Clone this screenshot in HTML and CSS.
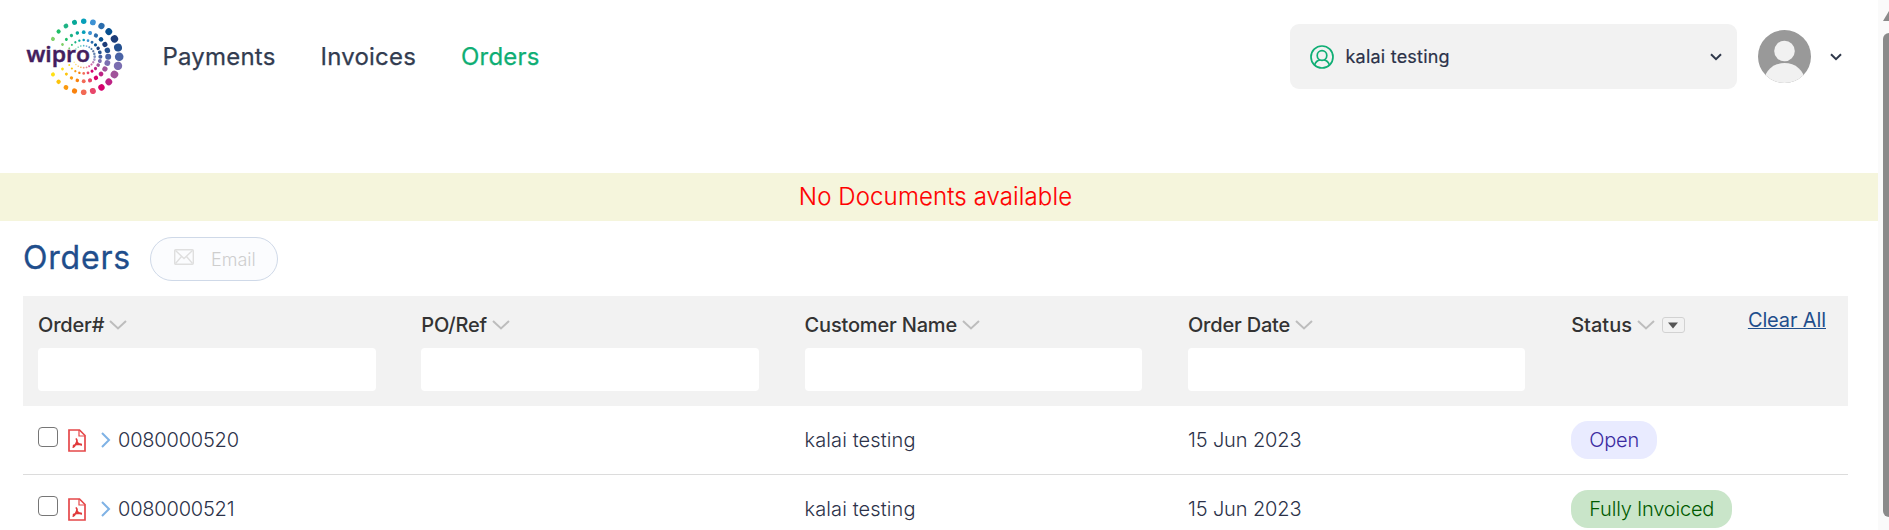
FILE: index.html
```html
<!DOCTYPE html>
<html lang="en">
<head>
<meta charset="utf-8">
<title>Orders</title>
<link rel="stylesheet" href="styles.css">
</head>
<body>
<svg class="defs" width="0" height="0">
  <defs>
    <g id="ring">
      <circle cx="35.5" r="4.3" fill="#4a63a5"/>
      <circle cx="35.5" r="4.2" fill="#7b6eb0" transform="rotate(15)"/>
      <circle cx="35.5" r="3.8" fill="#a1539a" transform="rotate(30)"/>
      <circle cx="35.5" r="3.4" fill="#bd2284" transform="rotate(45)"/>
      <circle cx="35.5" r="3.2" fill="#d6006c" transform="rotate(60)"/>
      <circle cx="35.5" r="3" fill="#e8476a" transform="rotate(75)"/>
      <circle cx="35.5" r="2.8" fill="#f26a55" transform="rotate(90)"/>
      <circle cx="35.5" r="2.6" fill="#f9820d" transform="rotate(105)"/>
      <circle cx="35.5" r="2.4" fill="#fb9a10" transform="rotate(120)"/>
      <circle cx="35.5" r="2.2" fill="#fdc40c" transform="rotate(135)"/>
      <circle cx="35.5" r="2" fill="#ffe014" transform="rotate(150)"/>
      <circle cx="35.5" r="4" fill="#24508f" transform="rotate(-15)"/>
      <circle cx="35.5" r="3.7" fill="#1c3c78" transform="rotate(-30)"/>
      <circle cx="35.5" r="3.4" fill="#075090" transform="rotate(-45)"/>
      <circle cx="35.5" r="3.1" fill="#2b6dad" transform="rotate(-60)"/>
      <circle cx="35.5" r="2.9" fill="#3d92d4" transform="rotate(-75)"/>
      <circle cx="35.5" r="2.7" fill="#079fb9" transform="rotate(-90)"/>
      <circle cx="35.5" r="2.5" fill="#08a898" transform="rotate(-105)"/>
      <circle cx="35.5" r="2.4" fill="#1eb384" transform="rotate(-120)"/>
      <circle cx="35.5" r="2.1" fill="#1dbe67" transform="rotate(-135)"/>
      <circle cx="35.5" r="2" fill="#7fd069" transform="rotate(-150)"/>
    </g>
    <symbol id="sort" viewBox="0 0 18 10"><path d="M1 1l8 7.5L17 1" fill="none" stroke="#bdbdbd" stroke-width="2"/></symbol>
    <symbol id="caret" viewBox="0 0 12 8"><path d="M1 1.2l5 5 5-5" fill="none" stroke="#2f384a" stroke-width="2"/></symbol>
    <symbol id="pdf" viewBox="0 0 18 23">
      <path d="M1 1h10.5l5.5 5.5V22H1z" fill="none" stroke="#e5484a" stroke-width="1.7"/>
      <path d="M11 1v6h6" fill="none" stroke="#e5484a" stroke-width="1.2"/>
      <path d="M8.300 10c1 1 .5 3.500-.6 5.300-.8 1.400-1.700 2.700-2.500 2.800M5.600 16.600c2-1 4.600-1.600 7.600-1.300M8.800 12.500c.7 1.600 2.300 3 4.400 3.500" fill="none" stroke="#e03a3c" stroke-width="1.700" stroke-linecap="round"/>
    </symbol>
    <symbol id="open" viewBox="0 0 10 16"><path d="M1 1l7 7-7 7" fill="none" stroke="#7fb2e5" stroke-width="2"/></symbol>
  </defs>
</svg>
<div class="app">
  <div class="page">
    <header class="topbar">
      <svg class="logo" width="100" height="82" viewBox="25 16 100 82">
        <g transform="translate(83.7 56.7)">
          <use href="#ring"/>
          <use href="#ring" transform="scale(.69)"/>
          <use href="#ring" transform="scale(.47)"/>
          <use href="#ring" transform="scale(.31)" opacity=".7"/>
        </g>
        <text class="logo-text" x="26.500" y="62" textLength="63.500" lengthAdjust="spacingAndGlyphs">wipro</text>
      </svg>
      <nav class="nav">
        <a>Payments</a>
        <a>Invoices</a>
        <a class="current">Orders</a>
      </nav>
      <div class="account">
        <svg width="24" height="24" viewBox="0 0 24 24" fill="none" stroke="#0fae74" stroke-width="1.700">
          <circle cx="12" cy="12" r="11"/><circle cx="12" cy="10.500" r="4.800"/>
          <path d="M4.600 20c1-3 3.300-4.800 5.400-5.200M19.400 20c-1-3-3.300-4.800-5.400-5.200"/>
        </svg>
        <span class="account-name">kalai testing</span>
        <svg width="12" height="8"><use href="#caret"/></svg>
      </div>
      <svg class="avatar" width="53" height="53" viewBox="0 0 53 53">
        <clipPath id="disc"><circle cx="26.500" cy="26.500" r="26.500"/></clipPath>
        <g clip-path="url(#disc)">
          <rect width="53" height="53" fill="#999"/>
          <circle cx="26.500" cy="21" r="10.300" fill="#f1f1f1"/>
          <ellipse cx="26.500" cy="50.500" rx="20" ry="17.500" fill="#f1f1f1"/>
        </g>
      </svg>
      <svg class="menu-caret" width="12" height="8"><use href="#caret"/></svg>
    </header>

    <div class="notice">No Documents available</div>

    <div class="title-row">
      <h1>Orders</h1>
      <button class="email" disabled>
        <svg width="20" height="16" viewBox="0 0 20 16" fill="none" stroke="#dfdfdf" stroke-width="1.400">
          <rect x=".7" y=".7" width="18.600" height="14.600" rx="1"/>
          <path d="M1.500 1.500l8.500 8 8.500-8M1.500 14.500l6-7M18.500 14.500l-6-7"/>
        </svg>
        <span>Email</span>
      </button>
    </div>

    <section class="table">
      <div class="row head">
        <div class="cell"><div class="label">Order# <svg width="18" height="10"><use href="#sort"/></svg></div><input class="filter"></div>
        <div class="cell"><div class="label">PO/Ref <svg width="18" height="10"><use href="#sort"/></svg></div><input class="filter"></div>
        <div class="cell"><div class="label">Customer Name <svg width="18" height="10"><use href="#sort"/></svg></div><input class="filter"></div>
        <div class="cell"><div class="label">Order Date <svg width="18" height="10"><use href="#sort"/></svg></div><input class="filter"></div>
        <div class="cell last">
          <div class="label status">Status <svg width="18" height="10"><use href="#sort"/></svg>
            <span class="picker"><svg width="10" height="7"><path d="M0 .5h10L5 6.500z" fill="#555"/></svg></span>
          </div>
          <a class="clear">Clear All</a>
        </div>
      </div>
      <div class="row">
        <div class="cell order"><span class="check"></span><svg class="pdf" width="18" height="23"><use href="#pdf"/></svg><svg class="open-icon" width="10" height="16"><use href="#open"/></svg><span class="number">0080000520</span></div>
        <div class="cell"></div>
        <div class="cell name">kalai testing</div>
        <div class="cell date">15 Jun 2023</div>
        <div class="cell"><span class="pill open">Open</span></div>
      </div>
      <div class="row">
        <div class="cell order"><span class="check"></span><svg class="pdf" width="18" height="23"><use href="#pdf"/></svg><svg class="open-icon" width="10" height="16"><use href="#open"/></svg><span class="number">0080000521</span></div>
        <div class="cell"></div>
        <div class="cell name">kalai testing</div>
        <div class="cell date">15 Jun 2023</div>
        <div class="cell"><span class="pill invoiced">Fully Invoiced</span></div>
      </div>
    </section>
  </div>
  <div class="scrollbar">
    <svg width="6" height="10" viewBox="0 0 6 10"><path d="M0 10L6 0v10z" fill="#8a8a8a"/></svg>
    <div class="thumb"></div>
  </div>
</div>
</body>
</html>
```
FILE: styles.css
```css
* { box-sizing: border-box; }
body {
  margin: 0;
  overflow: hidden;
  background: #fff;
  color: #2c3249;
  font-family: Inter, "Liberation Sans", sans-serif;
  font-size: 20px;
}
svg { display: block; flex: none; }
.defs { position: absolute; }
.app { display: flex; height: 530px; overflow: hidden; }
.page { width: 1878px; flex: none; }

.topbar {
  display: flex;
  align-items: center;
  height: 113px;
  padding: 0 36px 0 25px;
}
.logo-text { font: 600 21.5px "Open Sans", sans-serif; fill: #431d5e; stroke: #431d5e; stroke-width: .5px; }
.nav {
  display: flex;
  gap: 45px;
  margin-left: 37.5px;
  font-size: 24px;
  letter-spacing: .2px;
  -webkit-text-stroke: .25px currentColor;
  color: #323c50;
}
.nav .current { color: #0fae74; }
.account {
  display: flex;
  align-items: center;
  width: 447px;
  height: 65px;
  margin-left: auto;
  padding: 0 15px 0 20px;
  border-radius: 9px;
  background: #f2f2f2;
}
.account-name {
  flex: 1;
  margin-left: 11.5px;
  font-size: 18px;
  letter-spacing: .22px;
  -webkit-text-stroke: .2px currentColor;
}
.avatar { margin-left: 21px; }
.menu-caret { margin-left: 19px; }

.notice {
  height: 48px;
  margin-top: 60px;
  line-height: 48px;
  text-align: center;
  padding-right: 7px;
  background: #f5f5dc;
  color: #f00;
  font-size: 24px;
  font-weight: 300;
  letter-spacing: .12px;
  -webkit-text-stroke: .15px currentColor;
}

.title-row {
  display: flex;
  align-items: center;
  height: 75px;
  padding: 0 23px;
}
h1 {
  width: 108px;
  margin: -2px 0 0;
  font-size: 32px;
  font-weight: 400;
  letter-spacing: .8px;
  -webkit-text-stroke: .3px currentColor;
  color: #1f4e8c;
}
.email {
  display: flex;
  align-items: center;
  width: 128px;
  height: 44px;
  margin: 1px 0 0 19px;
  padding: 0 0 0 23px;
  gap: 17px;
  border: 1px solid #cfd9e8;
  border-radius: 22px;
  background: #fbfcfe;
  color: #cecece;
  font: 300 18px Inter, sans-serif;
}
.email svg { margin-bottom: 4px; }

.table { width: 1825px; margin-left: 23px; }
.row {
  display: grid;
  grid-template-columns: repeat(4, 383.3px) 1fr;
  align-items: center;
  height: 69px;
  padding-left: 15px;
  border-bottom: 1px solid #dcdcdc;
  font-weight: 300;
}
.row.head {
  height: 110px;
  border: 0;
  background: #f2f2f2;
  align-items: start;
  padding-top: 16px;
}
.label {
  display: flex;
  align-items: center;
  gap: 4.5px;
  height: 26px;
  font-weight: 500;
  letter-spacing: -.18px;
  color: #333;
}
.label.status { gap: 5px; letter-spacing: 0; }
.filter {
  display: block;
  width: 337.6px;
  height: 43px;
  margin-top: 10px;
  border: 0;
  border-radius: 4px;
  background: #fff;
}
.last { display: flex; justify-content: space-between; padding-right: 22px; }
.picker {
  display: grid;
  place-items: center;
  width: 23px;
  height: 16px;
  margin-left: 2px;
  border: 1px solid #d2d2d2;
  border-radius: 3px;
}
.clear {
  margin-top: -5px;
  line-height: 26px;
  font-weight: 400;
  letter-spacing: -.12px;
  color: #1f4e8c;
  text-decoration: underline;
  text-decoration-thickness: 1px;
}
.order { display: flex; align-items: center; }
.number { letter-spacing: -.2px; }
.name { letter-spacing: .1px; }
.date { letter-spacing: -.12px; }
.check {
  width: 20px;
  height: 20px;
  margin-bottom: 7px;
  border: 1.500px solid #767676;
  border-radius: 4px;
}
.pdf { margin-left: 10px; }
.open-icon { margin: 0 7px 0 15px; }
.pill {
  display: inline-block;
  height: 38px;
  line-height: 38px;
  padding: 0 18px;
  border-radius: 17px;
  letter-spacing: -.2px;
}
.pill.open { background: #e9ebff; color: #3a2aa0; }
.pill.invoiced { background: #c9e5c9; color: #005a00; }

.scrollbar { flex: 1; padding: 11px 0 0 5px; background: #fafafa; overflow: hidden; }
.thumb { width: 12px; height: 484px; margin-top: 12px; border-radius: 6px; background: #8a8a8a; }
```
